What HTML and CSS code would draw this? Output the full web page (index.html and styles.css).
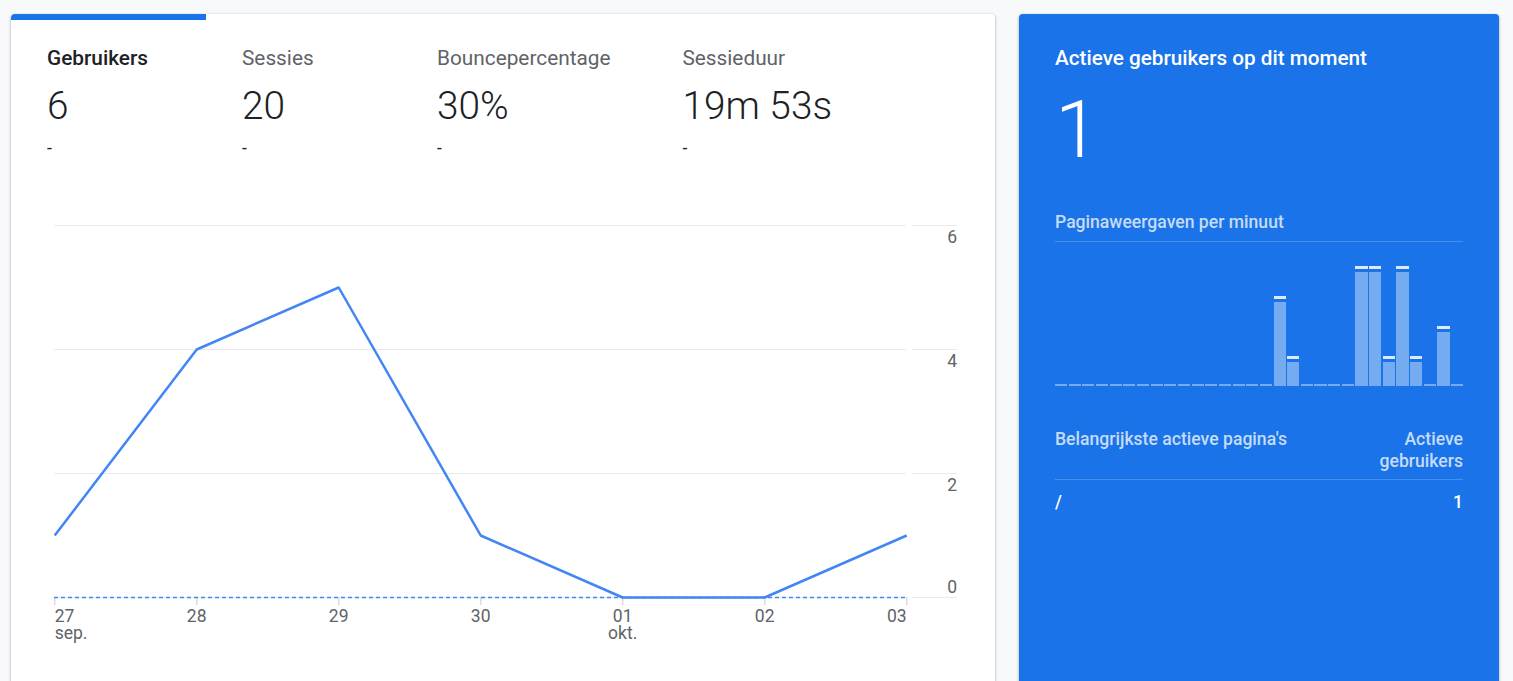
FILE: index.html
```html
<!DOCTYPE html>
<html lang="nl">
<head>
<meta charset="utf-8">
<title>Analytics</title>
<link rel="stylesheet" href="styles.css">
</head>
<body>
<div class="page">
  <section class="card overview">
    <div class="tabs">
      <div class="tab active">
        <div class="tab-label">Gebruikers</div>
        <div class="tab-value">6</div>
        <div class="tab-delta">-</div>
      </div>
      <div class="tab">
        <div class="tab-label">Sessies</div>
        <div class="tab-value">20</div>
        <div class="tab-delta">-</div>
      </div>
      <div class="tab">
        <div class="tab-label">Bouncepercentage</div>
        <div class="tab-value">30%</div>
        <div class="tab-delta">-</div>
      </div>
      <div class="tab">
        <div class="tab-label">Sessieduur</div>
        <div class="tab-value">19m 53s</div>
        <div class="tab-delta">-</div>
      </div>
    </div>
    <svg class="chart" width="984" height="481" viewBox="0 0 984 481">
      <g class="grid">
        <line x1="43" y1="26.5" x2="895" y2="26.5"/>
        <line x1="901" y1="26.5" x2="946" y2="26.5"/>
        <line x1="43" y1="150.5" x2="895" y2="150.5"/>
        <line x1="901" y1="150.5" x2="946" y2="150.5"/>
        <line x1="43" y1="274.5" x2="895" y2="274.5"/>
        <line x1="901" y1="274.5" x2="946" y2="274.5"/>
        <line x1="43" y1="398.5" x2="895" y2="398.5"/>
        <line x1="901" y1="398.5" x2="946" y2="398.5"/>
      </g>
      <g class="ticks">
        <line x1="43.7" y1="398" x2="43.7" y2="406"/>
        <line x1="185.7" y1="398" x2="185.7" y2="406"/>
        <line x1="327.7" y1="398" x2="327.7" y2="406"/>
        <line x1="469.7" y1="398" x2="469.7" y2="406"/>
        <line x1="611.7" y1="398" x2="611.7" y2="406"/>
        <line x1="753.7" y1="398" x2="753.7" y2="406"/>
        <line x1="895.7" y1="398" x2="895.7" y2="406"/>
      </g>
      <g class="ylabels">
        <text x="946" y="44">6</text>
        <text x="946" y="168">4</text>
        <text x="946" y="292">2</text>
        <text x="946" y="394">0</text>
      </g>
      <g class="xlabels">
        <text class="start" x="43.7" y="423">27</text>
        <text class="start" x="43.7" y="440">sep.</text>
        <text x="185.7" y="423">28</text>
        <text x="327.7" y="423">29</text>
        <text x="469.7" y="423">30</text>
        <text x="611.7" y="423">01</text>
        <text x="611.7" y="440">okt.</text>
        <text x="753.7" y="423">02</text>
        <text class="end" x="895.7" y="423">03</text>
      </g>
      <line class="zero" x1="43" y1="398.5" x2="895" y2="398.5"/>
      <polyline class="series" points="43.7,336.5 185.7,150.5 327.7,88.5 469.7,336.5 611.7,398.5 753.7,398.5 895.7,336.5"/>
    </svg>
  </section>

  <section class="card realtime">
    <h2 class="rt-title">Actieve gebruikers op dit moment</h2>
    <div class="rt-value">1</div>
    <h3 class="rt-sub">Paginaweergaven per minuut</h3>
    <div class="bars">
      <div class="bar zero"></div><div class="bar zero"></div><div class="bar zero"></div><div class="bar zero"></div><div class="bar zero"></div>
      <div class="bar zero"></div><div class="bar zero"></div><div class="bar zero"></div><div class="bar zero"></div><div class="bar zero"></div>
      <div class="bar zero"></div><div class="bar zero"></div><div class="bar zero"></div><div class="bar zero"></div><div class="bar zero"></div>
      <div class="bar zero"></div>
      <div class="bar" style="height:90px"><span class="cap"></span><span class="fill"></span></div>
      <div class="bar" style="height:30px"><span class="cap"></span><span class="fill"></span></div>
      <div class="bar zero"></div><div class="bar zero"></div><div class="bar zero"></div><div class="bar zero"></div>
      <div class="bar" style="height:120px"><span class="cap"></span><span class="fill"></span></div>
      <div class="bar" style="height:120px"><span class="cap"></span><span class="fill"></span></div>
      <div class="bar" style="height:30px"><span class="cap"></span><span class="fill"></span></div>
      <div class="bar" style="height:120px"><span class="cap"></span><span class="fill"></span></div>
      <div class="bar" style="height:30px"><span class="cap"></span><span class="fill"></span></div>
      <div class="bar zero"></div>
      <div class="bar" style="height:60px"><span class="cap"></span><span class="fill"></span></div>
      <div class="bar zero"></div>
    </div>
    <div class="rt-table">
      <div class="rt-head">
        <span class="col-page">Belangrijkste actieve pagina's</span>
        <span class="col-users">Actieve gebruikers</span>
      </div>
      <div class="rt-row">
        <span class="col-page">/</span>
        <span class="col-users">1</span>
      </div>
    </div>
  </section>
</div>
</body>
</html>
```

FILE: styles.css
```css
html, body {
  margin: 0;
  padding: 0;
  overflow: hidden;
  background: #f8f9fa;
  font-family: Roboto, "Liberation Sans", Arial, sans-serif;
}

.page {
  display: flex;
  align-items: flex-start;
  gap: 24px;
  padding: 14px 14px 0 11px;
}

.card {
  border-radius: 4px;
  box-shadow: 0 1px 2px rgba(60, 64, 67, 0.3), 0 1px 3px 1px rgba(60, 64, 67, 0.15);
  height: 720px;
  box-sizing: border-box;
}

.overview {
  width: 984px;
  background: #fff;
  overflow: hidden;
}

.tabs {
  display: flex;
}

.tab {
  min-width: 195px;
  box-sizing: border-box;
  padding: 24px 36px 0 36px;
  border-top: 6px solid transparent;
  color: #5f6368;
}

.tab.active {
  border-top-color: #1a73e8;
  color: #202124;
}

.tab-label {
  font-size: 20.8px;
  line-height: 28px;
  font-weight: 400;
  white-space: nowrap;
}

.tab.active .tab-label {
  font-weight: 500;
}

.tab-value {
  margin-top: 12px;
  font-size: 38.8px;
  line-height: 44px;
  font-weight: 300;
  color: #202124;
  white-space: nowrap;
}

.tab-delta {
  margin-top: 8px;
  font-size: 17.5px;
  line-height: 24px;
  color: #202124;
}

.chart {
  display: block;
  margin-top: 39px;
}

.grid line {
  stroke: #e8eaed;
  stroke-width: 1;
}

.ticks line {
  stroke: #dadce0;
  stroke-width: 1.5;
}

.ylabels text,
.xlabels text {
  font-family: Roboto, "Liberation Sans", Arial, sans-serif;
  font-size: 17.5px;
  fill: #5f6368;
}

.ylabels text {
  text-anchor: end;
}

.xlabels text {
  text-anchor: middle;
}

.xlabels text.start {
  text-anchor: start;
}

.xlabels text.end {
  text-anchor: end;
}

.zero {
  stroke: #4285f4;
  stroke-width: 1.5;
  stroke-dasharray: 4 3;
}

.series {
  fill: none;
  stroke: #4285f4;
  stroke-width: 2.5;
  stroke-linejoin: round;
}

.realtime {
  width: 480px;
  background: #1a73e8;
  color: #fff;
  padding: 30px 36px 0 36px;
}

.rt-title {
  margin: 0;
  font-size: 20.7px;
  line-height: 28px;
  font-weight: 500;
}

.rt-value {
  margin-top: 18px;
  font-size: 80px;
  line-height: 80px;
  font-weight: 300;
}

.rt-sub {
  margin: 40px 0 0 0;
  padding-bottom: 7px;
  border-bottom: 1px solid rgba(255, 255, 255, 0.2);
  font-size: 17.6px;
  line-height: 24px;
  font-weight: 500;
  color: rgba(255, 255, 255, 0.75);
}

.bars {
  margin-top: 24px;
  height: 120px;
  display: flex;
  align-items: flex-end;
  gap: 1.5px;
}

.bar {
  flex: 1;
  display: flex;
  flex-direction: column;
}

.bar.zero {
  height: 2px;
  background: rgba(255, 255, 255, 0.4);
}

.bar .cap {
  height: 3px;
  margin-bottom: 3px;
  background: rgba(255, 255, 255, 0.85);
}

.bar .fill {
  flex: 1;
  background: rgba(255, 255, 255, 0.4);
}

.rt-table {
  margin-top: 42px;
  font-size: 17.6px;
  line-height: 22px;
}

.rt-head {
  display: flex;
  justify-content: space-between;
  align-items: flex-start;
  padding-bottom: 7px;
  border-bottom: 1px solid rgba(255, 255, 255, 0.2);
  color: rgba(255, 255, 255, 0.75);
  font-weight: 500;
}

.rt-head .col-users {
  width: 100px;
  text-align: right;
}

.rt-row {
  display: flex;
  justify-content: space-between;
  padding-top: 11px;
  font-weight: 500;
}
```
